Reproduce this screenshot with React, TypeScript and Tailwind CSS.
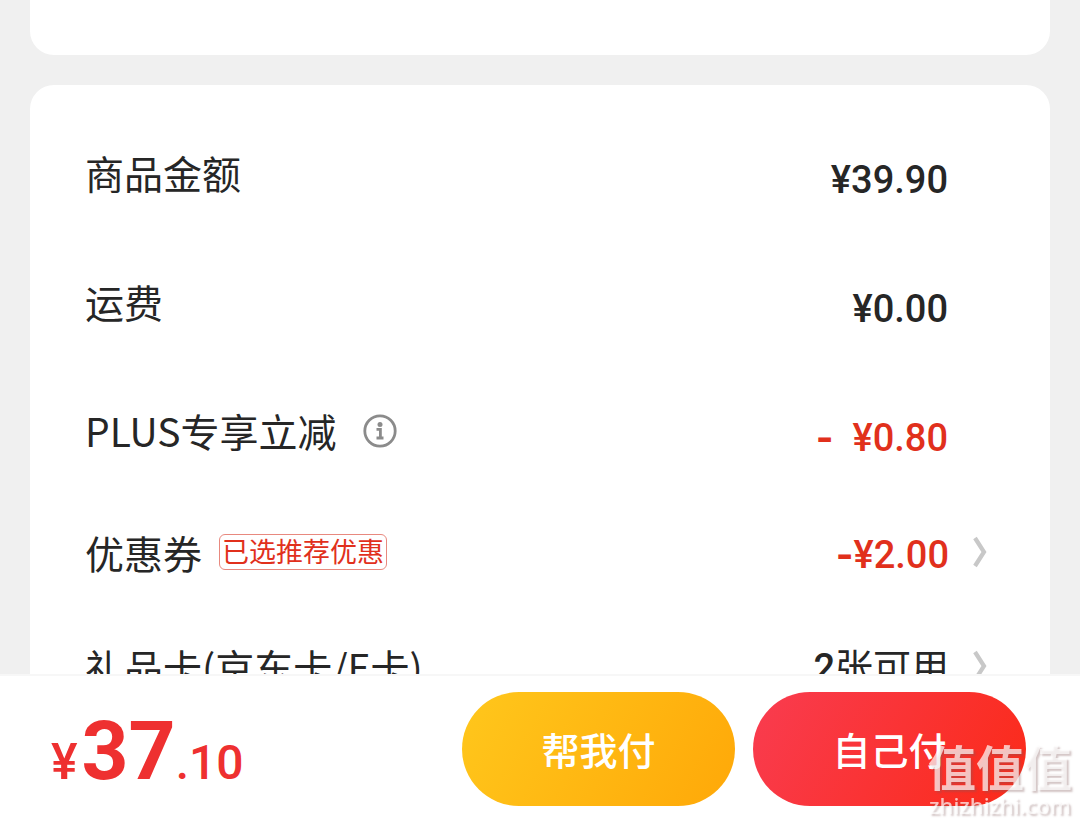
import React from 'react';

interface AmountRowProps {
  label: string;
  value: React.ReactNode;
  extra?: React.ReactNode;
  discount?: boolean;
}

const InfoIcon = () => (
  <svg width="34" height="34" viewBox="0 0 34 34" fill="none" aria-hidden="true">
    <circle cx="17" cy="17" r="15.200" stroke="#8b8b8b" strokeWidth="2.800" />
    <circle cx="17" cy="10.500" r="2.500" fill="#8b8b8b" />
    <path d="M13.500 15.400H17.400V24M13.500 24H20.500" stroke="#8b8b8b" strokeWidth="2.800" />
  </svg>
);

const ChevronIcon = () => (
  <svg width="14" height="32" viewBox="0 0 14 32" fill="none" aria-hidden="true">
    <path d="M2 2L11 16L2 30" stroke="#c8c8c8" strokeWidth="4.200" />
  </svg>
);

const Minus = () => <span className="font-['Inter'] font-bold">-</span>;

// Plain amount line, nothing to open
const AmountRow: React.FC<AmountRowProps> = ({ label, value, extra, discount = false }) => (
  <div className="flex h-[129px] items-center justify-between pr-[47px]">
    <div className="flex items-center">
      <span>{label}</span>
      {extra}
    </div>
    <span
      className={`pt-[14px] font-['Roboto','Noto_Sans_CJK_SC',sans-serif] text-[38px] font-medium whitespace-pre ${
        discount ? 'text-[#e1301c]' : ''
      }`}
    >
      {value}
    </span>
  </div>
);

// Line that opens a picker
const LinkRow: React.FC<AmountRowProps> = ({ label, value, extra, discount = false }) => (
  <button className="flex h-[114px] w-full items-center justify-between pr-2 text-left">
    <span className="flex items-center">
      {label}
      {extra}
    </span>
    <span className="flex items-center gap-6">
      <span
        className={`pt-1 font-['Roboto','Noto_Sans_CJK_SC',sans-serif] text-[38px] ${
          discount ? 'font-medium text-[#e1301c]' : ''
        }`}
      >
        {value}
      </span>
      <ChevronIcon />
    </span>
  </button>
);

const App: React.FC = () => {
  return (
    <div className="flex h-screen flex-col bg-[#f0f0f0] font-['Noto_Sans_CJK_SC',sans-serif] text-[39px] leading-none text-[#262626]">
      <main className="min-h-0 flex-1 overflow-y-auto px-[30px] [scrollbar-width:none]">
        <section className="h-[55px] rounded-b-3xl bg-white"></section>

        <section className="mt-[30px] rounded-t-3xl bg-white px-[55px] pt-[23px]">
          <AmountRow label="商品金额" value="¥39.90" />
          <AmountRow label="运费" value="¥0.00" />
          <AmountRow
            label="PLUS专享立减"
            value={<><Minus />  ¥0.80</>}
            discount
            extra={
              <button className="ml-[26px]" aria-label="PLUS专享立减说明">
                <InfoIcon />
              </button>
            }
          />
          <LinkRow
            label="优惠券"
            value={<><Minus />¥2.00</>}
            discount
            extra={
              <span className="ml-[17px] flex h-9 items-center rounded-md border border-[#e8897f] px-[2px] pb-1 text-[27px] text-[#e1301c]">
                已选推荐优惠
              </span>
            }
          />
          <LinkRow label="礼品卡(京东卡/E卡)" value={<><b className="font-medium">2</b>张可用</>} />
        </section>
      </main>

      <footer className="flex items-center justify-between border-t-2 border-[#f7f7f7] bg-white pt-4 pr-[54px] pb-[18px] pl-[51px]">
        <div className="flex items-baseline pt-1 font-['Roboto',sans-serif] text-[50px] font-medium text-[#ee3030]">
          <span className="mr-1">¥</span>
          <span className="text-[82px] font-bold">37</span>
          <span className="text-[48px]">.10</span>
        </div>
        <div className="flex gap-[18px] text-[38px] font-medium text-white">
          <button className="h-[114px] w-[273px] rounded-full bg-linear-[120deg] from-[#ffc71c] to-[#ffa808]">
            帮我付
          </button>
          <button className="h-[114px] w-[273px] rounded-full bg-linear-[120deg] from-[#f93c50] to-[#fb2a18]">
            自己付
          </button>
        </div>
      </footer>

      {/* Site mark */}
      <div className="pointer-events-none fixed right-2 bottom-[7px] flex flex-col items-center text-white/70 [text-shadow:2px_2px_2px_rgba(130,90,90,0.35)]">
        <span className="text-[48px] leading-[56px] font-bold">值值值</span>
        <span className="font-['Noto_Sans',sans-serif] text-[22px] leading-6 font-medium">zhizhizhi.com</span>
      </div>
    </div>
  );
};

export default App;
